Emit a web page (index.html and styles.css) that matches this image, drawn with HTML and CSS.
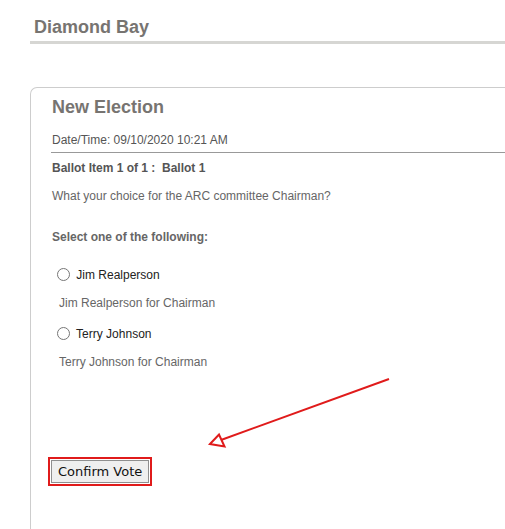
FILE: index.html
```html
<!DOCTYPE html>
<html>
<head>
<meta charset="utf-8">
<link rel="stylesheet" href="styles.css">
</head>
<body>
<div class="page">
  <header class="site-header">
    <h1 class="site-title">Diamond Bay</h1>
  </header>
  <section class="card">
    <h2 class="card-title">New Election</h2>
    <p class="meta">Date/Time: 09/10/2020 10:21 AM</p>
    <hr class="divider">
    <p class="ballot-item">Ballot Item 1 of 1 :&nbsp; Ballot 1</p>
    <p class="question">What your choice for the ARC committee Chairman?</p>
    <p class="instructions">Select one of the following:</p>
    <div class="options">
      <div class="option">
        <label class="option-label"><input type="radio" name="choice"> Jim Realperson</label>
        <p class="option-desc">Jim Realperson for Chairman</p>
      </div>
      <div class="option">
        <label class="option-label"><input type="radio" name="choice"> Terry Johnson</label>
        <p class="option-desc">Terry Johnson for Chairman</p>
      </div>
    </div>
    <div class="actions">
      <button class="confirm" type="button">Confirm Vote</button>
    </div>
  </section>
  <svg class="annotation" width="505" height="529" viewBox="0 0 505 529">
    <line x1="389" y1="379" x2="221" y2="440" stroke="#e01b1b" stroke-width="2"/>
    <polygon points="210,444 219,434.5 224.5,446.5" fill="#fff" stroke="#e01b1b" stroke-width="2" stroke-linejoin="miter"/>
  </svg>
</div>
</body>
</html>
```

FILE: styles.css
```css
html, body {
  margin: 0;
  padding: 0;
  background: #fff;
  overflow: hidden;
}
body {
  font-family: "Liberation Sans", Arial, sans-serif;
  width: 505px;
  height: 529px;
}
.page {
  position: relative;
  padding-left: 30px;
  height: 529px;
  overflow: hidden;
}
.site-header {
  padding-top: 17px;
}
.site-title {
  margin: 0;
  padding: 0 0 3px 4px;
  font-size: 18px;
  line-height: 21px;
  font-weight: bold;
  color: #777471;
  border-bottom: 3px solid #d6d6d3;
}
.card {
  box-sizing: border-box;
  margin-top: 43px;
  border: 1px solid #cdcdcd;
  border-right: none;
  border-bottom: none;
  border-radius: 7px 0 0 0;
  padding: 9px 0 0 21px;
  height: 442px;
}
.card-title {
  margin: 0;
  font-size: 18px;
  line-height: 21px;
  font-weight: bold;
  color: #777471;
}
.meta {
  margin: 15px 0 0;
  font-size: 12px;
  line-height: 14px;
  color: #555;
}
.divider {
  margin: 5px 0 0 -1px;
  border: 0;
  border-top: 1px solid #999;
  height: 0;
}
.ballot-item {
  margin: 8px 0 0;
  font-size: 12px;
  line-height: 14px;
  font-weight: bold;
  color: #555;
}
.question {
  margin: 14px 0 0;
  font-size: 12px;
  line-height: 14px;
  color: #666;
}
.instructions {
  margin: 27px 0 0;
  font-size: 12px;
  line-height: 14px;
  font-weight: bold;
  color: #666;
}
.options {
  margin-top: 24px;
  display: flex;
  flex-direction: column;
  gap: 17px;
}
.option-label {
  display: block;
  font-size: 12px;
  line-height: 14px;
  color: #222;
}
.option-label input {
  margin: 0 3px 0 5px;
  vertical-align: -2px;
}
.option-desc {
  margin: 14px 0 0 7px;
  font-size: 12px;
  line-height: 14px;
  color: #666;
}
.actions {
  margin-top: 91px;
}
.confirm {
  margin-left: -1px;
  font-family: "DejaVu Sans", Tahoma, sans-serif;
  font-size: 13px;
  height: 23px;
  padding: 0 6px;
  color: #111;
  background: #efefef;
  border: 1px solid #8f8f8f;
  border-radius: 0;
  outline: 2px solid #e01b1b;
  outline-offset: 1px;
}
.annotation {
  position: absolute;
  left: 0;
  top: 0;
  pointer-events: none;
}
```
